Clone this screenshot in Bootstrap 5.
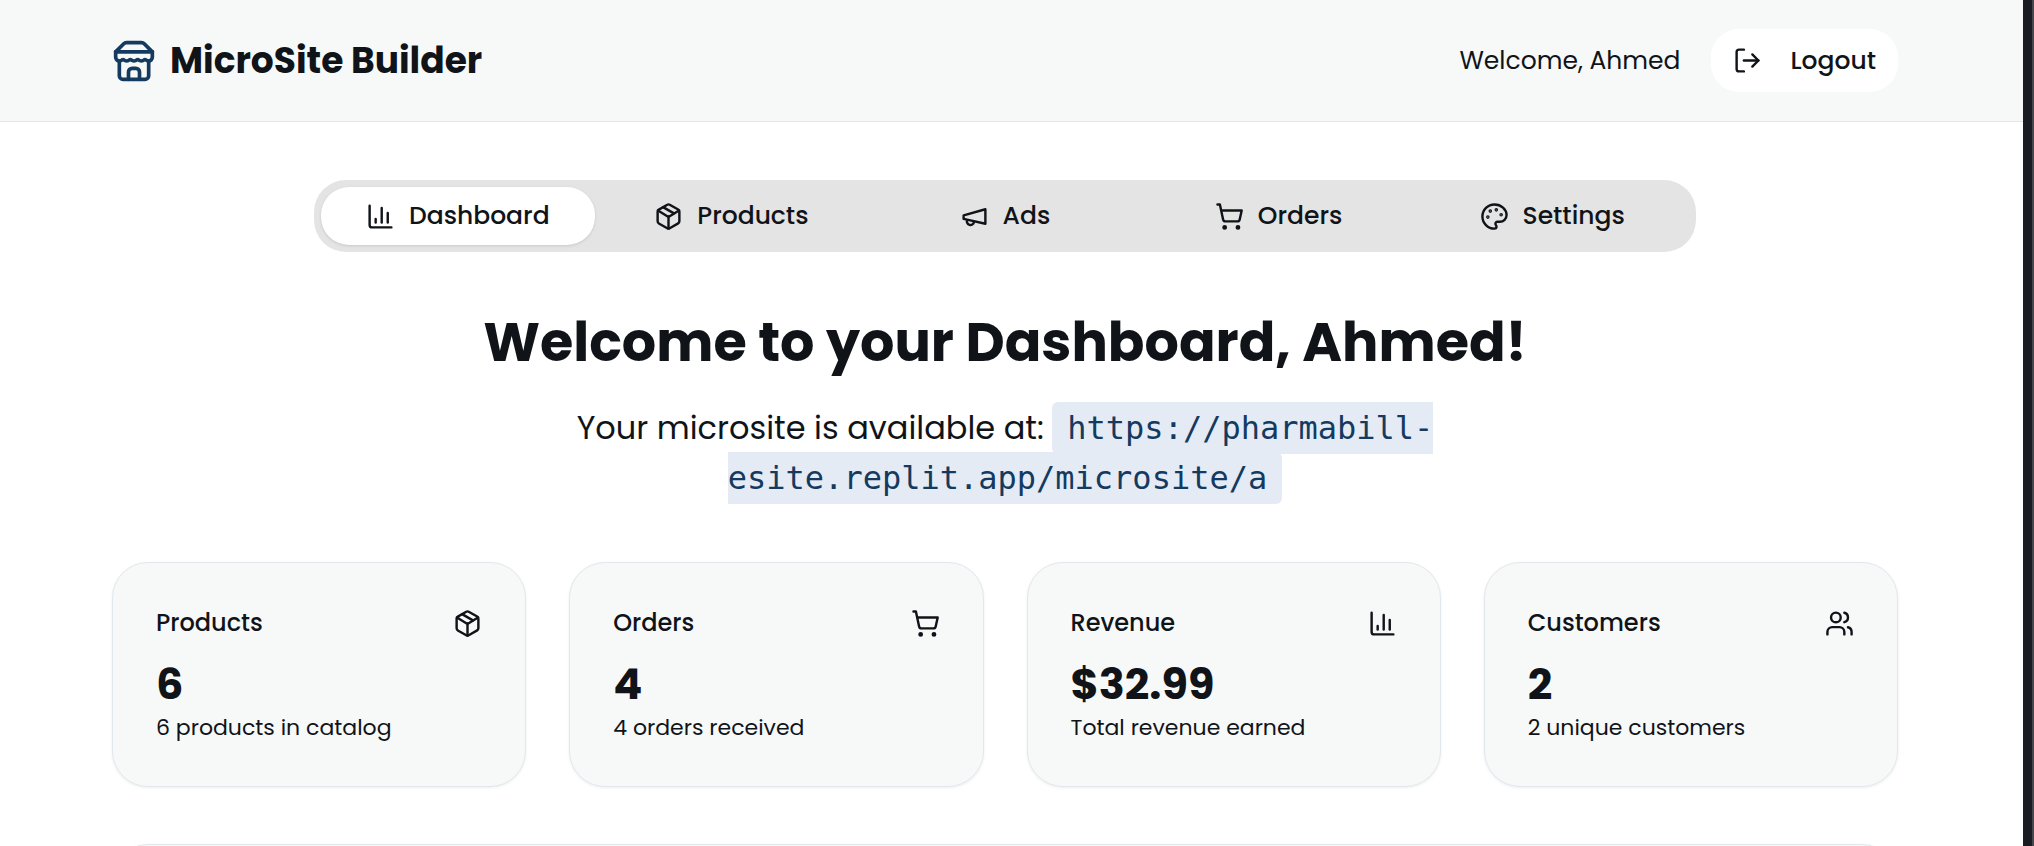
<!DOCTYPE html>
<html lang="en">
<head>
<meta charset="utf-8">
<meta name="viewport" content="width=device-width, initial-scale=1">
<title>MicroSite Builder</title>
<link href="https://cdn.jsdelivr.net/npm/bootstrap@5.3.0/dist/css/bootstrap.min.css" rel="stylesheet">
<style>
  :root {
    --ink: #101419;
    --navy: #153a5f;
    --surface: #f7f9f9;
    --line: #e1e8ed;
  }
  body { font-family: Poppins, Inter, sans-serif; color: var(--ink); background: #fff; }
  .page { padding-right: 13px; }
  .window-edge { width: 11px; background: #191c23; border-right: 2px solid #45474d; }
  .icon { width: 29px; height: 29px; flex: none; fill: none; stroke: currentColor; stroke-width: 2; stroke-linecap: round; stroke-linejoin: round; }
  .gutter { padding-left: 112px; padding-right: 112px; }

  .site-header { background: var(--surface); border-bottom: 1px solid #e2e6e7; margin-right: -13px; padding-right: 13px; }
  .site-header .gutter { padding-top: 29px; padding-bottom: 29px; }
  .brand { gap: 14px; font-size: 36px; line-height: 44px; font-weight: 700; color: var(--ink); }
  .brand .icon { width: 44px; height: 44px; color: var(--navy); }
  .account { gap: 30px; }
  .greeting { font-size: 25px; }
  .btn-logout { --bs-btn-bg: #fff; --bs-btn-color: var(--ink); --bs-btn-font-size: 25px; --bs-btn-font-weight: 500; height: 63px; padding: 0 22px; gap: 29px; border: 0; border-radius: 28px; }

  main { padding-top: 58px; }
  .tabs { width: 1382px; max-width: 100%; padding: 7px; background: #e4e4e4; border-radius: 32px; margin-bottom: 60px; }
  .tabs .nav-link { --bs-nav-link-color: var(--ink); height: 58px; padding: 0; gap: 14px; font-size: 25px; font-weight: 500; color: var(--ink); border-radius: 28px; }
  .tabs .nav-link.active { background: #fff; color: var(--ink); box-shadow: 0 1px 3px rgba(0,0,0,.12); }

  h1 { font-size: 54px; line-height: 60px; font-weight: 700; margin-bottom: 31px; }
  .site-address { max-width: 1000px; font-size: 32px; line-height: 50px; margin-bottom: 59px; }
  .site-address code { font-family: "DejaVu Sans Mono", monospace; font-size: 32px; color: var(--navy); background: #e4ebf5; padding: 7px 15px; border-radius: 6px; }

  .panel { background: var(--surface); border: 1px solid var(--line); border-radius: 36px; box-shadow: 0 1px 3px rgba(16,40,70,.08); }
  .stats { --bs-gutter-x: 43px; margin-bottom: 57px; }
  .stats .panel { padding: 43px; }
  .stat-title { font-size: 24px; line-height: 34px; font-weight: 500; margin: 0; }
  .stat-value { font-size: 43px; line-height: 50px; font-weight: 700; margin: 19px 0 4px; }
  .stat-note { font-size: 22px; line-height: 30px; margin: 0; }
  .next-panel { height: 400px; }
</style>
</head>
<body>
<svg class="d-none" aria-hidden="true">
  <symbol id="store" viewBox="0 0 24 24"><path d="m2 7 4.41-4.41A2 2 0 0 1 7.83 2h8.34a2 2 0 0 1 1.42.59L22 7"/><path d="M4 12v8a2 2 0 0 0 2 2h12a2 2 0 0 0 2-2v-8"/><path d="M15 22v-4a2 2 0 0 0-2-2h-2a2 2 0 0 0-2 2v4"/><path d="M2 7h20"/><path d="M22 7v3a2 2 0 0 1-2 2a2.700 2.700 0 0 1-1.590-.630.700.700 0 0 0-.820 0A2.700 2.700 0 0 1 16 12a2.700 2.700 0 0 1-1.590-.630.700.700 0 0 0-.820 0A2.700 2.700 0 0 1 12 12a2.700 2.700 0 0 1-1.590-.630.700.700 0 0 0-.820 0A2.700 2.700 0 0 1 8 12a2.700 2.700 0 0 1-1.590-.630.700.700 0 0 0-.820 0A2.700 2.700 0 0 1 4 12a2 2 0 0 1-2-2V7"/></symbol>
  <symbol id="logout" viewBox="0 0 24 24"><path d="M9 21H5a2 2 0 0 1-2-2V5a2 2 0 0 1 2-2h4"/><path d="m16 17 5-5-5-5"/><path d="M21 12H9"/></symbol>
  <symbol id="chart" viewBox="0 0 24 24"><path d="M3 3v16a2 2 0 0 0 2 2h16"/><path d="M18 17V9"/><path d="M13 17V5"/><path d="M8 17v-3"/></symbol>
  <symbol id="package" viewBox="0 0 24 24"><path d="M11 21.730a2 2 0 0 0 2 0l7-4A2 2 0 0 0 21 16V8a2 2 0 0 0-1-1.730l-7-4a2 2 0 0 0-2 0l-7 4A2 2 0 0 0 3 8v8a2 2 0 0 0 1 1.730z"/><path d="M12 22V12"/><path d="m3.300 7 7.703 4.734a2 2 0 0 0 1.994 0L20.700 7"/><path d="m7.500 4.270 9 5.150"/></symbol>
  <symbol id="megaphone" viewBox="0 0 24 24"><path d="m3 11 18-5v12L3 14v-3z"/><path d="M11.600 16.800a3 3 0 1 1-5.800-1.600"/></symbol>
  <symbol id="cart" viewBox="0 0 24 24"><circle cx="8" cy="21" r="1"/><circle cx="19" cy="21" r="1"/><path d="M2.050 2.050h2l2.660 12.420a2 2 0 0 0 2 1.580h9.780a2 2 0 0 0 1.950-1.570l1.650-7.430H5.120"/></symbol>
  <symbol id="palette" viewBox="0 0 24 24"><g fill="currentColor"><circle cx="13.500" cy="6.500" r=".5"/><circle cx="17.500" cy="10.500" r=".5"/><circle cx="8.500" cy="7.500" r=".5"/><circle cx="6.500" cy="12.500" r=".5"/></g><path d="M12 2C6.500 2 2 6.500 2 12s4.500 10 10 10c.926 0 1.648-.746 1.648-1.688 0-.437-.180-.835-.437-1.125-.290-.289-.438-.652-.438-1.125a1.640 1.640 0 0 1 1.668-1.668h1.996c3.051 0 5.555-2.503 5.555-5.554C21.965 6.012 17.461 2 12 2z"/></symbol>
  <symbol id="users" viewBox="0 0 24 24"><path d="M16 21v-2a4 4 0 0 0-4-4H6a4 4 0 0 0-4 4v2"/><circle cx="9" cy="7" r="4"/><path d="M22 21v-2a4 4 0 0 0-3-3.870"/><path d="M16 3.130a4 4 0 0 1 0 7.750"/></symbol>
</svg>

<div class="d-flex vh-100 overflow-hidden">
  <div class="page flex-grow-1">
    <header class="site-header">
      <div class="gutter d-flex align-items-center justify-content-between">
        <a href="#" class="brand d-flex align-items-center text-decoration-none"><svg class="icon"><use href="#store"/></svg>MicroSite Builder</a>
        <div class="account d-flex align-items-center">
          <span class="greeting">Welcome, Ahmed</span>
          <button type="button" class="btn btn-logout d-flex align-items-center"><svg class="icon"><use href="#logout"/></svg>Logout</button>
        </div>
      </div>
    </header>

    <main class="gutter">
      <nav class="tabs nav nav-justified mx-auto" aria-label="Sections">
        <a href="#" class="nav-link active d-flex align-items-center justify-content-center" aria-current="page"><svg class="icon"><use href="#chart"/></svg>Dashboard</a>
        <a href="#" class="nav-link d-flex align-items-center justify-content-center"><svg class="icon"><use href="#package"/></svg>Products</a>
        <a href="#" class="nav-link d-flex align-items-center justify-content-center"><svg class="icon"><use href="#megaphone"/></svg>Ads</a>
        <a href="#" class="nav-link d-flex align-items-center justify-content-center"><svg class="icon"><use href="#cart"/></svg>Orders</a>
        <a href="#" class="nav-link d-flex align-items-center justify-content-center"><svg class="icon"><use href="#palette"/></svg>Settings</a>
      </nav>

      <h1 class="text-center">Welcome to your Dashboard, Ahmed!</h1>
      <p class="site-address text-center mx-auto">Your microsite is available at: <code>https://pharmabill-esite.replit.app/microsite/a</code></p>

      <section class="stats row row-cols-4">
        <div class="col"><div class="panel">
          <div class="d-flex justify-content-between align-items-center"><h2 class="stat-title">Products</h2><svg class="icon"><use href="#package"/></svg></div>
          <p class="stat-value">6</p><p class="stat-note">6 products in catalog</p>
        </div></div>
        <div class="col"><div class="panel">
          <div class="d-flex justify-content-between align-items-center"><h2 class="stat-title">Orders</h2><svg class="icon"><use href="#cart"/></svg></div>
          <p class="stat-value">4</p><p class="stat-note">4 orders received</p>
        </div></div>
        <div class="col"><div class="panel">
          <div class="d-flex justify-content-between align-items-center"><h2 class="stat-title">Revenue</h2><svg class="icon"><use href="#chart"/></svg></div>
          <p class="stat-value">$32.99</p><p class="stat-note">Total revenue earned</p>
        </div></div>
        <div class="col"><div class="panel">
          <div class="d-flex justify-content-between align-items-center"><h2 class="stat-title">Customers</h2><svg class="icon"><use href="#users"/></svg></div>
          <p class="stat-value">2</p><p class="stat-note">2 unique customers</p>
        </div></div>
      </section>

      <section class="panel next-panel"></section>
    </main>
  </div>
  <div class="window-edge flex-shrink-0"></div>
</div>
<script src="https://cdn.jsdelivr.net/npm/bootstrap@5.3.0/dist/js/bootstrap.bundle.min.js"></script>
</body>
</html>
